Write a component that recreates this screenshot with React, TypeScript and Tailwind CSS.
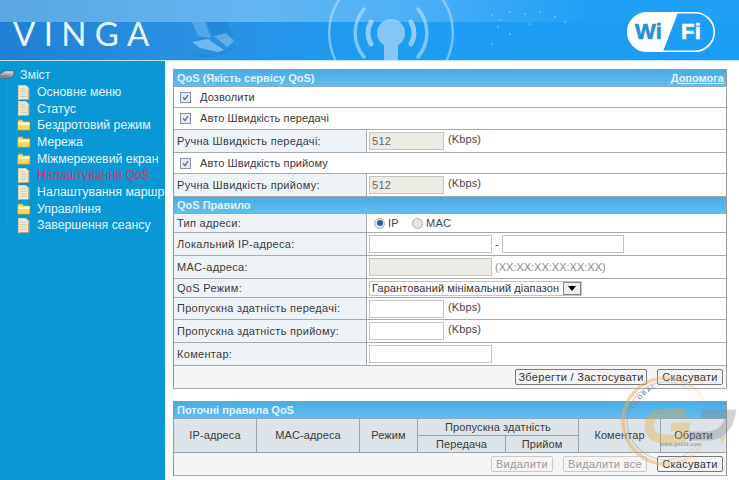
import React from "react";

const Page = () => (
  <svg width="12" height="15" viewBox="0 0 12 15" className="shrink-0">
    <path d="M0.500 0.500H8L11 3.500V14.500H0.500Z" fill="#f1e9cf" stroke="#d8d2b8" />
    <path d="M2.500 4H7.500M2.500 6.500H8.500M2.500 9H8.500M2.500 11.500H8.500" stroke="#d2cba9" />
    <path d="M11 4V15H2" fill="none" stroke="#857f68" strokeWidth="1" />
  </svg>
);
const Folder = () => (
  <svg width="14" height="12" viewBox="0 0 14 12" className="shrink-0">
    <path d="M0.500 2.500L1.500 0.800H5.500L6.500 2.500H13V11.300H0.500Z" fill="#f4d95f" stroke="#94893f" strokeWidth="0.700" />
    <path d="M1.500 3.500H12.500V6H1.500Z" fill="#fff6c2" />
  </svg>
);

const items: [string, "p" | "f", boolean?][] = [
  ["Основне меню", "p"],
  ["Статус", "p"],
  ["Бездротовий режим", "f"],
  ["Мережа", "f"],
  ["Міжмережевий екран", "f"],
  ["Налаштування QoS", "p", true],
  ["Налаштування маршр", "p"],
  ["Управління", "f"],
  ["Завершення сеансу", "p"],
];

const Row = ({ h, children }: { h: string; children: React.ReactNode }) => (
  <div className={`flex border-b border-[#a9a9a9] ${h}`}>{children}</div>
);
const Label = ({ children }: { children: React.ReactNode }) => (
  <div className="w-[193px] shrink-0 flex items-center pl-[3px] bg-[#eef3f7] border-r border-[#a9a9a9] text-[#3a3a3a]">{children}</div>
);
const Val = ({ children }: { children: React.ReactNode }) => (
  <div className="flex-1 flex items-center pl-[2px] bg-white min-w-0">{children}</div>
);
const Input = ({ w, disabled, value }: { w: string; disabled?: boolean; value?: string }) => (
  <div className={`h-[18px] border border-[#c4c4c0] flex items-center pl-[2px] text-[#666] ${w} ${disabled ? "bg-[#ecebe4]" : "bg-white"}`}>{value}</div>
);
const Kbps = () => <span className="ml-[4px] text-[#444] -mt-[3px] tracking-[0.1px]">(Kbps)</span>;
const Check = () => (
  <div className="w-[11px] h-[11px] border border-[#8592ad] bg-[#e6e9f2] flex items-center justify-center">
    <svg width="7" height="7" viewBox="0 0 7 7"><path d="M1 3.500L3 5.500L6 1" fill="none" stroke="#55648a" strokeWidth="1.200" /></svg>
  </div>
);
const CheckRow = ({ h, text }: { h: string; text: string }) => (
  <Row h={h}>
    <div className="flex-1 flex items-center pl-[6px] bg-white">
      <Check />
      <span className="ml-[9px] text-[#3a3a3a] tracking-[0.1px]">{text}</span>
    </div>
  </Row>
);
const Section = ({ h, children }: { h: string; children: React.ReactNode }) => (
  <div className={`flex items-center justify-between pl-[3px] pr-[2px] font-bold tracking-normal text-[#e3f2fb] bg-gradient-to-b from-[#49abe4] to-[#62bdf0] border-b border-[#8fa9bb] ${h}`}>{children}</div>
);
const Btn = ({ children, w, off }: { children: React.ReactNode; w: string; off?: boolean }) => (
  <div className={`h-[16px] ${w} flex items-center justify-center rounded-[2px] border bg-[#f4f4f4] ${off ? "border-[#c8c8c8] text-[#999]" : "border-[#777] text-[#333]"}`}>{children}</div>
);
const Radio = ({ on }: { on?: boolean }) => (
  <div className="w-[11px] h-[11px] rounded-full border border-[#aab] bg-[#e6e6e6] flex items-center justify-center">
    {on && <div className="w-[6px] h-[6px] rounded-full bg-[#2a5f95]" />}
  </div>
);
const Th = ({ w, children }: { w: string; children: React.ReactNode }) => (
  <div className={`${w} shrink-0 flex items-center justify-center border-r border-[#9aa2a8]`}>{children}</div>
);

export default function App() {
  return (
    <div className="relative w-[739px] h-[480px] overflow-hidden bg-white text-[11px] tracking-[0.3px] font-['Liberation_Sans',Arial,sans-serif]">
      {/* banner */}
      <div className="relative h-[60px] overflow-hidden bg-[linear-gradient(90deg,#1f80d4_0%,#2a8fe2_25%,#1f9bf2_50%,#1c9ef6_100%)]">
        <div className="absolute inset-x-0 top-0 h-[22px] bg-[linear-gradient(90deg,#5aa7e2,#63b6f2_35%,#4db0f6_55%,#1f9ff6_80%)]" />
        <svg width="739" height="60" viewBox="0 0 739 60" className="absolute inset-0">
          <g fill="#a6d6f8" opacity="0.75">
            <circle cx="391" cy="33" r="14" />
            <rect x="384" y="40" width="14" height="20" />
          </g>
          <g fill="none" stroke="#bfe2fb" strokeLinecap="round">
            <path d="M411 22A22 22 0 0 1 411 44" strokeWidth="5" opacity="0.7" />
            <path d="M418 9A37 37 0 0 1 418 57" strokeWidth="3.500" opacity="0.6" />
            <path d="M437 -8A61 61 0 0 1 437 74" strokeWidth="2.500" opacity="0.55" />
            <path d="M371 22A22 22 0 0 0 371 44" strokeWidth="5" opacity="0.7" />
            <path d="M364 9A37 37 0 0 0 364 57" strokeWidth="3.500" opacity="0.6" />
            <path d="M345 -8A61 61 0 0 0 345 74" strokeWidth="2.500" opacity="0.55" />
          </g>
          {/* hands on a keyboard */}
          <path d="M207 22H226L234 36L222 40L212 34Z" fill="#1c6fb4" opacity="0.3" />
          <path d="M192 22H205L211 38L198 36Z" fill="#9fd3f7" opacity="0.35" />
          <path d="M192 42L208 39L224 50L218 52L200 48Z" fill="#cfe8fa" opacity="0.45" />
          <path d="M214 36L226 33L234 41L227 47Z" fill="#b9dcf5" opacity="0.4" />
          <path d="M192 54Q215 60 236 46" fill="none" stroke="#1c6fb4" strokeWidth="3" opacity="0.2" />
          <g fill="#9fd6fb" opacity="0.6">
            <circle cx="492" cy="15" r="1" /><circle cx="500" cy="20" r="1" /><circle cx="510" cy="12" r="1" />
            <circle cx="525" cy="14" r="1" /><circle cx="540" cy="12" r="1" /><circle cx="555" cy="17" r="1" />
            <circle cx="565" cy="22" r="1" /><circle cx="498" cy="27" r="1" /><circle cx="510" cy="34" r="1" />
            <circle cx="492" cy="44" r="1" /><circle cx="530" cy="24" r="1" />
          </g>
          {/* Wi-Fi logo */}
          <rect x="627.800" y="12.800" width="86.400" height="38.400" rx="19.200" fill="none" stroke="#fff" strokeWidth="1.600" />
          <path d="M647 12.500H678L663 51.500H647A19.500 19.500 0 0 1 647 12.500Z" fill="#fff" />
          <text x="635" y="39" fontFamily="'Liberation Sans',Arial,sans-serif" fontWeight="700" fontSize="22" fill="#2a8ed8" stroke="#2a8ed8" strokeWidth="0.600">Wi</text>
          <text x="681" y="39" fontFamily="'Liberation Sans',Arial,sans-serif" fontWeight="700" fontSize="22" fill="#fff" stroke="#fff" strokeWidth="0.600">Fi</text>
        </svg>
        <div className="absolute left-[13px] top-[13px] text-[33px] leading-[40px] tracking-[8.300px] text-[#eaf7ff] font-normal font-['Lato',sans-serif]">VINGA</div>
      </div>
      <div className="h-px bg-[#bfe5f7]" />

      <div className="flex h-[419px]">
        {/* sidebar */}
        <div className="relative w-[165px] shrink-0 overflow-hidden bg-[#0a97d6] pt-[6px] text-[12.300px] tracking-normal whitespace-nowrap">
          <div className="absolute left-[7px] top-[20px] h-[145px] border-l border-dotted border-[#5a8aa8]" />
          <div className="flex items-center h-[16.700px] text-[#dff3fd]">
            <svg width="17" height="12" viewBox="0 0 17 12" className="shrink-0 ml-[-1px]">
              <path d="M1 5L5 2H15V6L11 9H1Z" fill="#aab2b8" stroke="#4d565c" strokeWidth="0.800" />
              <path d="M1 6H11V9H1Z" fill="#7d878d" />
              <path d="M6 3H14" stroke="#eef" />
            </svg>
            <span className="ml-[4px]">Зміст</span>
          </div>
          {items.map(([t, k, active]) => (
            <div key={t} className="flex items-center h-[16.700px] pl-[17px]">
              <div className="w-[13px] shrink-0 flex justify-center">{k === "p" ? <Page /> : <Folder />}</div>
              <span className={`ml-[7px] ${active ? "text-[#c93a6a]" : "text-[#e3f4fd]"}`}>{t}</span>
            </div>
          ))}
        </div>

        {/* main */}
        <div className="flex-1 pt-[8px] pl-[8px] min-w-0">
          <div className="w-[554px] border border-[#9a9a9a] border-b-0 bg-white">
            <Section h="h-[17px]">
              <span>QoS (Якість сервісу QoS)</span>
              <span className="underline">Допомога</span>
            </Section>
            <CheckRow h="h-[21px]" text="Дозволити" />
            <CheckRow h="h-[22px]" text="Авто Швидкість передачі" />
            <Row h="h-[23px]">
              <Label>Ручна Швидкість передачі:</Label>
              <Val><Input w="w-[75px]" disabled value="512" /><Kbps /></Val>
            </Row>
            <CheckRow h="h-[21px]" text="Авто Швидкість прийому" />
            <Row h="h-[23px]">
              <Label>Ручна Швидкість прийому:</Label>
              <Val><Input w="w-[75px]" disabled value="512" /><Kbps /></Val>
            </Row>
            <Section h="h-[17px]"><span>QoS Правило</span></Section>
            <Row h="h-[19px]">
              <Label>Тип адреси:</Label>
              <Val>
                <div className="flex items-center ml-[5px] text-[#444]">
                  <Radio on /><span className="ml-[3px]">IP</span>
                  <div className="ml-[13px]"><Radio /></div><span className="ml-[3px]">MAC</span>
                </div>
              </Val>
            </Row>
            <Row h="h-[23px]">
              <Label>Локальний IP-адреса:</Label>
              <Val><Input w="w-[123px]" /><span className="mx-[3px] w-[4px] text-[#444]">-</span><Input w="w-[122px]" /></Val>
            </Row>
            <Row h="h-[23px]">
              <Label>MAC-адреса:</Label>
              <Val><Input w="w-[123px]" disabled /><span className="ml-[3px] text-[#888] tracking-normal">(XX:XX:XX:XX:XX:XX)</span></Val>
            </Row>
            <Row h="h-[19px]">
              <Label>QoS Режим:</Label>
              <Val>
                <div className="h-[15px] w-[213px] flex items-center justify-between border border-[#c4c4c0] pl-[2px] text-[#333] whitespace-nowrap tracking-[0.1px]">
                  <span>Гарантований мінімальний діапазон</span>
                  <div className="w-[18px] h-[13px] border border-[#888] bg-[#eee] flex items-center justify-center shrink-0">
                    <div className="w-0 h-0 border-x-[4px] border-x-transparent border-t-[5px] border-t-black" />
                  </div>
                </div>
              </Val>
            </Row>
            <Row h="h-[22px]">
              <Label>Пропускна здатність передачі:</Label>
              <Val><Input w="w-[75px]" /><Kbps /></Val>
            </Row>
            <Row h="h-[23px]">
              <Label>Пропускна здатність прийому:</Label>
              <Val><Input w="w-[75px]" /><Kbps /></Val>
            </Row>
            <Row h="h-[23px]">
              <Label>Коментар:</Label>
              <Val><Input w="w-[123px]" /></Val>
            </Row>
            <Row h="h-[23px]">
              <div className="flex-1 flex items-center justify-end gap-[10px] pr-[3px] bg-[#f5f5f5]">
                <Btn w="w-[132px]">Зберегти / Застосувати</Btn>
                <Btn w="w-[66px]">Скасувати</Btn>
              </div>
            </Row>
          </div>

          <div className="mt-[12px] w-[554px] border border-[#9a9a9a] border-b-0 bg-white">
            <Section h="h-[17px]"><span>Поточні правила QoS</span></Section>
            <div className="flex h-[34px] bg-[#dde4e9] border-b border-[#9aa2a8] text-[#3a3a3a] tracking-[0.1px]">
              <Th w="w-[83px]">IP-адреса</Th>
              <Th w="w-[103px]">MAC-адреса</Th>
              <Th w="w-[58px]">Режим</Th>
              <div className="w-[161px] shrink-0 flex flex-col border-r border-[#9aa2a8]">
                <div className="h-[17px] flex items-center justify-center border-b border-[#9aa2a8]">Пропускна здатність</div>
                <div className="flex-1 flex">
                  <div className="w-[88px] flex items-center justify-center border-r border-[#9aa2a8]">Передача</div>
                  <div className="flex-1 flex items-center justify-center">Прийом</div>
                </div>
              </div>
              <Th w="w-[82px]">Коментар</Th>
              <div className="flex-1 flex items-center justify-center">Обрати</div>
            </div>
            <Row h="h-[23px]">
              <div className="flex-1 flex items-center justify-end gap-[10px] pr-[3px] bg-[#f5f5f5]">
                <Btn w="w-[62px]" off>Видалити</Btn>
                <Btn w="w-[84px]" off>Видалити все</Btn>
                <Btn w="w-[66px]">Скасувати</Btn>
              </div>
            </Row>
          </div>
        </div>
      </div>

      {/* watermark */}
      <svg width="130" height="110" viewBox="0 0 130 110" className="absolute left-[609px] top-[370px] pointer-events-none">
        <defs>
          <path id="wm-arc" d="M26 39A37 37 0 0 1 86 26" fill="none" />
          <linearGradient id="wm-o" x1="0" x2="1" y1="0" y2="0">
            <stop offset="0" stopColor="#e8ad62" stopOpacity="0.55" />
            <stop offset="0.7" stopColor="#e8ad62" stopOpacity="0.35" />
            <stop offset="1" stopColor="#e8ad62" stopOpacity="0" />
          </linearGradient>
          <linearGradient id="wm-g" x1="0" x2="1" y1="0" y2="0">
            <stop offset="0" stopColor="#8f9498" stopOpacity="0.4" />
            <stop offset="0.7" stopColor="#8f9498" stopOpacity="0.25" />
            <stop offset="1" stopColor="#8f9498" stopOpacity="0" />
          </linearGradient>
        </defs>
        <circle cx="57" cy="51" r="43" fill="none" stroke="url(#wm-o)" strokeWidth="3.500" />
        <circle cx="57" cy="51" r="39" fill="none" stroke="url(#wm-g)" strokeWidth="1.300" />
        <path d="M76 43H56Q40 43 40 56Q41 69 56 69H73L76 57H62" fill="none" stroke="#e9a838" strokeWidth="9" opacity="0.36" />
        <path d="M80 66H100Q118 64 122 44H92" fill="none" stroke="#7f868a" strokeWidth="9" opacity="0.36" />
        <text fontSize="6" fontFamily="'Liberation Sans',sans-serif" fontWeight="700" fill="#8a8f92" letterSpacing="1"><textPath href="#wm-arc">GLOBAL</textPath></text>
        <text x="51" y="76" fontSize="5" fontFamily="'Liberation Sans',sans-serif" fontWeight="700" fill="#8a8f92" opacity="0.8">www.gecid.com</text>
        <text x="111" y="71" fontSize="9" fontFamily="'Liberation Sans',sans-serif" fontWeight="700" fill="#e9a838" opacity="0.55">y</text>
      </svg>
    </div>
  );
}
